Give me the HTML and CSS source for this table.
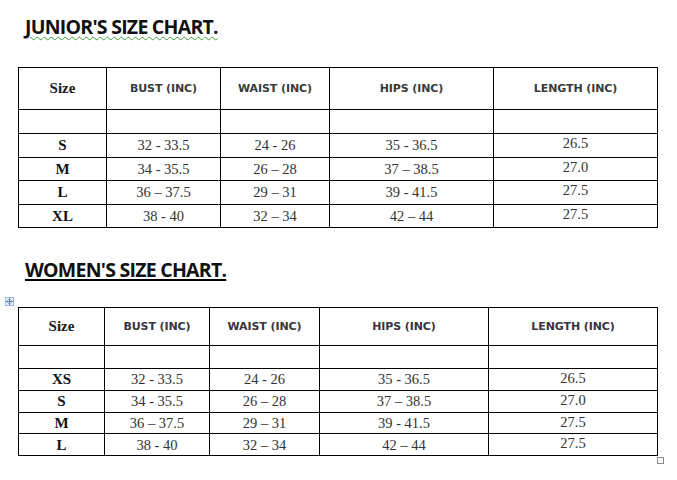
FILE: index.html
```html
<!DOCTYPE html>
<html>
<head>
<meta charset="utf-8">
<link rel="stylesheet" href="styles.css">
</head>
<body>
<div class="page">
  <section class="chart junior">
    <h1 class="title"><span class="spell">JUNIOR'S SIZE CHART.</span></h1>
    <table class="sizes">
      <colgroup>
        <col class="j1"><col class="j2"><col class="j3"><col class="j4"><col class="j5">
      </colgroup>
      <tr class="head">
        <th class="size-h">Size</th><th>BUST (INC)</th><th>WAIST (INC)</th><th>HIPS (INC)</th><th>LENGTH (INC)</th>
      </tr>
      <tr class="empty"><td></td><td></td><td></td><td></td><td></td></tr>
      <tr class="row"><td class="sz">S</td><td>32 - 33.5</td><td>24 - 26</td><td>35 - 36.5</td><td class="len">26.5</td></tr>
      <tr class="row"><td class="sz">M</td><td>34 - 35.5</td><td>26 – 28</td><td>37 – 38.5</td><td class="len">27.0</td></tr>
      <tr class="row"><td class="sz">L</td><td>36 – 37.5</td><td>29 – 31</td><td>39 - 41.5</td><td class="len">27.5</td></tr>
      <tr class="row"><td class="sz">XL</td><td>38 - 40</td><td>32 – 34</td><td>42 – 44</td><td class="len">27.5</td></tr>
    </table>
  </section>
  <section class="chart women">
    <h1 class="title"><span class="plain">WOMEN'S SIZE CHART.</span></h1>
    <div class="table-wrap">
      <span class="move-handle">
        <svg width="9" height="9" viewBox="0 0 9 9">
          <rect x="0.5" y="0.5" width="8" height="8" fill="#eef3fb" stroke="#9fb3d6"/>
          <path d="M4.5 1.5v6M1.5 4.5h6M3.5 2.5l1-1 1 1M3.5 6.5l1 1 1-1M2.5 3.5l-1 1 1 1M6.5 3.5l1 1-1 1" stroke="#3b63a8" stroke-width="0.8" fill="none"/>
        </svg>
      </span>
      <table class="sizes">
        <colgroup>
          <col class="w1"><col class="w2"><col class="w3"><col class="w4"><col class="w5">
        </colgroup>
        <tr class="head head2">
          <th class="size-h">Size</th><th>BUST (INC)</th><th>WAIST (INC)</th><th>HIPS (INC)</th><th>LENGTH (INC)</th>
        </tr>
        <tr class="empty"><td></td><td></td><td></td><td></td><td></td></tr>
        <tr class="row row2"><td class="sz">XS</td><td>32 - 33.5</td><td>24 - 26</td><td>35 - 36.5</td><td class="len">26.5</td></tr>
        <tr class="row row2"><td class="sz">S</td><td>34 - 35.5</td><td>26 – 28</td><td>37 – 38.5</td><td class="len">27.0</td></tr>
        <tr class="row row2"><td class="sz">M</td><td>36 – 37.5</td><td>29 – 31</td><td>39 - 41.5</td><td class="len">27.5</td></tr>
        <tr class="row row2"><td class="sz">L</td><td>38 - 40</td><td>32 – 34</td><td>42 – 44</td><td class="len">27.5</td></tr>
      </table>
      <span class="resize-handle"></span>
    </div>
  </section>
</div>
</body>
</html>
```

FILE: styles.css
```css
html, body {
  margin: 0;
  padding: 0;
  background: #ffffff;
}
.page {
  width: 677px;
  height: 480px;
  padding-left: 18px;
  box-sizing: border-box;
}
.chart {
  display: flex;
  flex-direction: column;
}
.junior {
  padding-top: 14px;
}
.women {
  padding-top: 29px;
}
.title {
  margin: 0 0 0 7px;
  font-family: "Open Sans", "Liberation Sans", sans-serif;
  font-weight: 700;
  font-size: 19.5px;
  line-height: 26px;
  letter-spacing: -0.75px;
  color: #111;
}
.spell {
  text-decoration: underline wavy #3a9a3a;
  text-decoration-thickness: 1px;
  text-underline-offset: 2px;
}
.plain {
  text-decoration: underline #000;
  text-decoration-thickness: 1.5px;
  text-underline-offset: 2px;
}
.junior .title {
  margin-bottom: 27px;
}
.women .title {
  margin-bottom: 0;
}
.table-wrap {
  position: relative;
  padding-top: 24px;
  width: 639px;
}
.move-handle {
  position: absolute;
  left: -13px;
  top: 14px;
  width: 9px;
  height: 9px;
  display: block;
}
.move-handle svg {
  display: block;
}
.resize-handle {
  position: absolute;
  left: 639px;
  top: 174px;
  width: 5px;
  height: 5px;
  border: 1px solid #8a8a8a;
  background: #fff;
}
.sizes {
  border-collapse: collapse;
  table-layout: fixed;
  width: 639px;
}
.sizes th, .sizes td {
  border: 1px solid #000;
  padding: 0;
  text-align: center;
  vertical-align: middle;
}
.j1 { width: 88px; }
.j2 { width: 114px; }
.j3 { width: 109px; }
.j4 { width: 164px; }
.j5 { width: 164px; }
.w1 { width: 86px; }
.w2 { width: 105px; }
.w3 { width: 110px; }
.w4 { width: 169px; }
.w5 { width: 169px; }
.head th {
  height: 41px;
  font-family: "DejaVu Sans", Verdana, sans-serif;
  font-weight: 700;
  font-size: 11px;
  color: #3a3a3a;
  letter-spacing: -0.1px;
}
.head2 th {
  height: 37px;
  color: #3b3340;
}
.head th.size-h {
  font-family: "Liberation Serif", "Times New Roman", serif;
  font-size: 15px;
  color: #1a1a1a;
  letter-spacing: 0;
}
.empty td {
  height: 23px;
}
.head2 + .empty td {
  height: 22px;
}
.row td {
  height: 22.5px;
  font-family: "Liberation Serif", "Times New Roman", serif;
  font-size: 14.5px;
  color: #333;
  line-height: 16px;
}
.row2 td {
  height: 20.75px;
}
.row td.sz {
  font-weight: 700;
  font-size: 15px;
  color: #111;
}
.row td.len {
  vertical-align: top;
  line-height: 18px;
}
```
